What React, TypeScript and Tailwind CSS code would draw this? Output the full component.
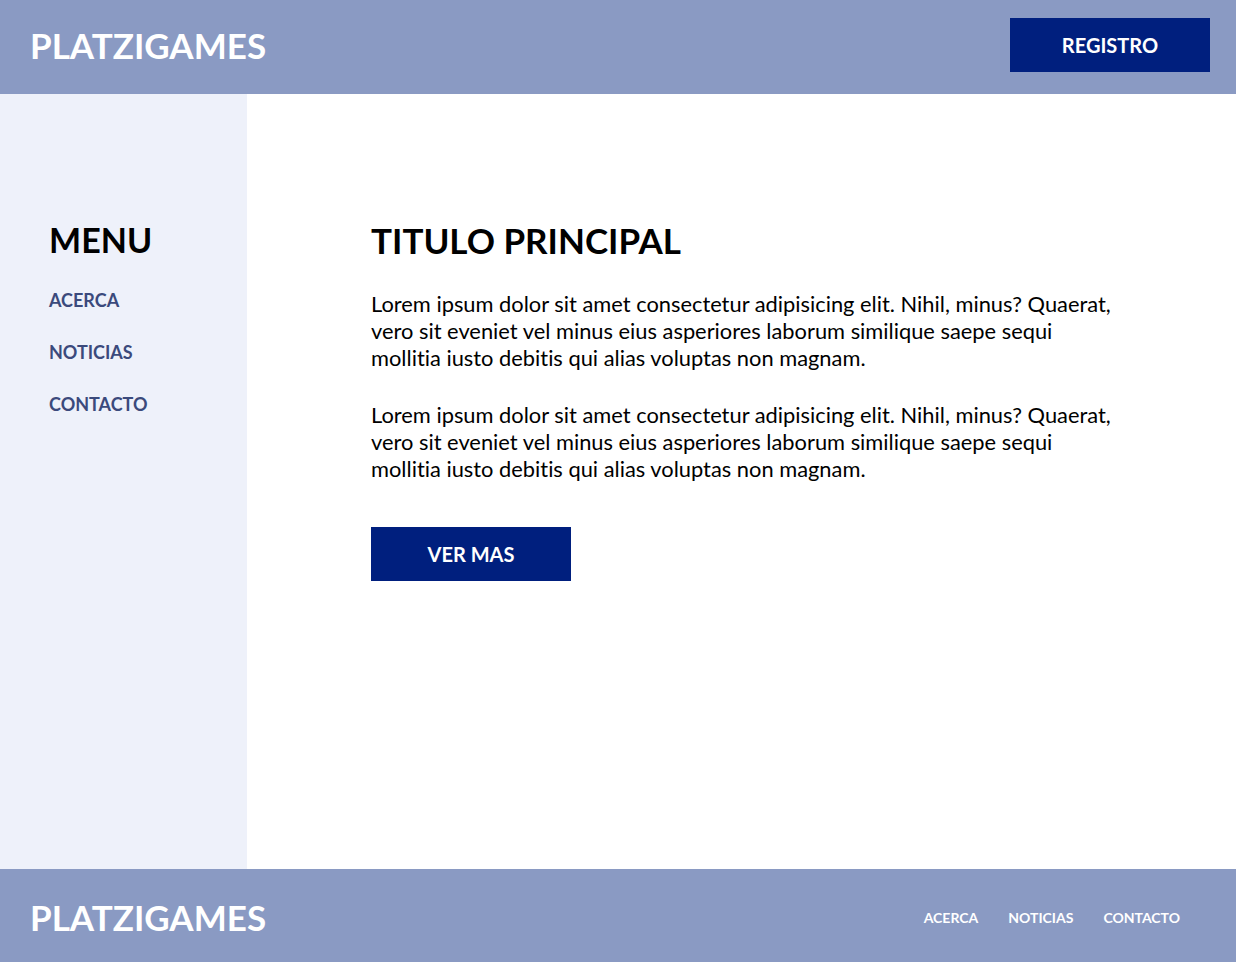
import React from "react";

const links = ["ACERCA", "NOTICIAS", "CONTACTO"];

const lorem =
  "Lorem ipsum dolor sit amet consectetur adipisicing elit. Nihil, minus? Quaerat, vero sit eveniet vel minus eius asperiores laborum similique saepe sequi mollitia iusto debitis qui alias voluptas non magnam.";

const App = () => {
  return (
    <div className="flex flex-col min-h-screen font-['Lato',sans-serif]">
      <header className="flex justify-between items-start h-[94px] bg-[#8a9ac3] pl-[30px] pr-[26px] pt-[18px]">
        <h1 className="text-[35px] font-bold text-white leading-[54px]">PLATZIGAMES</h1>
        <button className="w-[200px] h-[54px] bg-[#001f7e] text-white text-[20px] font-bold">
          REGISTRO
        </button>
      </header>

      <div className="flex flex-1">
        <aside className="w-[247px] bg-[#eef1fa] pl-[49px] pt-[129px]">
          <h2 className="text-[34px] font-bold text-black leading-none">MENU</h2>
          <nav className="flex flex-col gap-[29px] mt-[32px]">
            {links.map((l) => (
              <a key={l} href="#" className="text-[18px] font-bold text-[#3b4a7c] leading-[23px]">
                {l}
              </a>
            ))}
          </nav>
        </aside>

        <main className="flex-1 pl-[124px] pr-[60px] pt-[129px] bg-white">
          <h2 className="text-[35px] font-bold text-black leading-none">TITULO PRINCIPAL</h2>
          <p className="mt-[32px] w-[748px] text-[21.85px] leading-[27px] text-black [font-variant-ligatures:none]">
            {lorem}
          </p>
          <p className="mt-[30px] w-[748px] text-[21.85px] leading-[27px] text-black [font-variant-ligatures:none]">
            {lorem}
          </p>
          <button className="mt-[45px] w-[200px] h-[54px] bg-[#001f7e] text-white text-[20px] font-bold">
            VER MAS
          </button>
        </main>
      </div>

      <footer className="flex justify-between items-center h-[93px] bg-[#8a9ac3] pl-[30px] pr-[56px] pt-[4px]">
        <h2 className="text-[35px] font-bold text-white">PLATZIGAMES</h2>
        <nav className="flex gap-[30px]">
          {links.map((l) => (
            <a key={l} href="#" className="text-[14px] font-bold text-white">
              {l}
            </a>
          ))}
        </nav>
      </footer>
    </div>
  );
};

export default App;
